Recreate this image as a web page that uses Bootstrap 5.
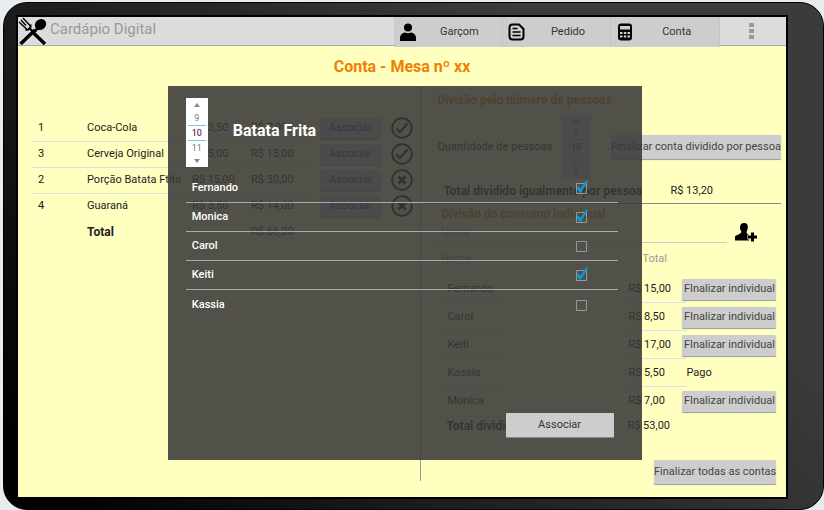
<!DOCTYPE html>
<html lang="pt-BR">
<head>
<meta charset="utf-8">
<meta name="viewport" content="width=device-width, initial-scale=1">
<title>Cardápio Digital</title>
<link href="https://cdn.jsdelivr.net/npm/bootstrap@5.3.0/dist/css/bootstrap.min.css" rel="stylesheet">
<style>
body{font-family:Roboto,"Liberation Sans",sans-serif;font-size:11px;line-height:16px;color:#222;background:#e6ecf0;padding:2px 0 0 3px;min-height:100vh;display:flex}
.device{flex:1;border:1px solid #000;border-radius:24px;padding:12px 35px 10px 12px;background:linear-gradient(50deg,#000 5%,#1b1b1b 33%,#3b3b3b 75%);display:flex}
.screen{flex:1;border:2px solid #000;background:#ffffc0}
.topbar{background:#dcdcdc;border-bottom:1px solid #aaa;height:29px}
.brand-name{font-size:15px;color:#999;margin-left:2px}
.tabs{width:326px;background:#cdcdcd;height:30px}
.tabs button{flex:1;border:0;border-right:1px solid #c5c5c5;background:none;padding:0 0 0 5px;color:#333;display:flex;align-items:center}
.tabs svg{width:18px;height:18px}
.tabs span{flex:1;text-align:center}
.more{width:66px;border:0;background:none;padding:0 4px 0 0}
h1{font-size:16px;line-height:26px;color:#f08000;font-weight:700}
h2{font-size:12px;line-height:16px;color:#f08000;font-weight:700}
.panes{padding-top:6px}
.orders{width:52.4%;padding:29px 7px 0 14px}
.bill{flex:1;border-left:1px solid #999;height:395px;padding:6px 5px 0 4px}
table{width:100%;table-layout:fixed}
.otable td{height:26px;padding:0 0 0 6px;vertical-align:middle;white-space:nowrap}
.otable tr.ln td{border-bottom:1px solid #ddd}
.otable tr td.noln{border:0}
.gbtn{border:0;background:#cdcdcd;color:#444;padding:0;border-radius:1px;box-shadow:0 1px 1px #999;text-align:center;white-space:nowrap;font-size:11px;line-height:16px}
.otable .gbtn{width:61px;height:21px;display:block}
.tot{font-size:12px;font-weight:700}
.picker{background:#fff;color:#777;display:flex;flex-direction:column;align-items:center;font-size:9px;line-height:14px}
.picker button{border:0;background:none;padding:0;height:12px;width:100%;display:flex;align-items:center;justify-content:center}
.picker .sel{border:solid #6cc8ee;border-width:1px 0;width:18px;text-align:center;color:#404}
.qty{width:30px;height:64px;background:#d2d2d8}
.qty .sel{width:26px}
.people{padding-top:7px}
.splitbtn{width:170px;height:24px}
.sum{border-bottom:1px solid #888;height:25px;padding-left:18px}
.sum b{font-size:12px;width:227px}
.individual{margin:2px 0 0 16px}
.newname{flex:1;min-width:0;border:0;border-bottom:1px solid #ccc;background:none;height:20px;padding:0 7px;color:#999;outline:0}
.newname::placeholder{color:#999}
.ptable{width:335px;margin:7px 0 0 16px}
.ptable th{font-weight:400;color:#999;height:24px;padding:0;vertical-align:top}
.ptable td{height:28px;padding:0;vertical-align:middle;white-space:nowrap}
.ptable .cell{display:block;height:28px;line-height:27px;padding-left:6px;width:65px;border-bottom:1px solid #dde}
.ptable tr.last .cell{border:0}
.ptable tr.total td{height:22px;padding-left:5px}
.ptable .gbtn{width:94px;height:21px;display:block;position:relative}
.allbtn{width:122px;height:24px;margin:23px 5px 0 0}
.dialogbox{position:absolute;z-index:2;top:69px;left:19.5%;width:61.7%;height:374px;background:rgba(55,55,55,.87);color:#fff;padding:12px 24px 23px 18px}
.dialogbox .picker{width:22px;height:69px;padding-top:1px}
.dialogbox h3{font-size:16px;line-height:20px;font-weight:700;margin:0 0 4px 25px}
.people-list{padding-top:7px}
.person{height:29px;border-bottom:1px solid #aaa;padding:0 29px 0 6px;font-size:11px;font-weight:500}
.person:last-child{border:0}
.tick{appearance:none;width:14px;height:16px;margin:0;background:url("data:image/svg+xml,%3Csvg xmlns='http://www.w3.org/2000/svg' width='14' height='14'%3E%3Cpath d='M1.5 3.5h10v10h-10z' fill='none' stroke='%23999'/%3E%3C/svg%3E") no-repeat}
.tick:checked{background-image:url("data:image/svg+xml,%3Csvg xmlns='http://www.w3.org/2000/svg' width='14' height='14'%3E%3Cpath d='M1.5 3.5h10v10h-10z' fill='none' stroke='%23999'/%3E%3Cpath d='M1.500 8l2.500-1.800 1.200 2.800L11 .8 13.500 .3 6 12.500H4z' fill='%23069bdc'/%3E%3C/svg%3E")}
.okbtn{width:108px;height:24px;margin-right:4px;color:#333;box-shadow:0 1px 0 #888}
</style>
<script src="https://cdn.jsdelivr.net/npm/bootstrap@5.3.0/dist/js/bootstrap.bundle.min.js"></script>
</head>
<body>
<svg class="d-none">
<symbol id="ok" viewBox="0 0 22 22"><circle cx="11" cy="11" r="9.800" fill="none" stroke="#000" stroke-width="1.800"/><path d="M5.500 11.500l3.500 3.500 7.500-8.500" fill="none" stroke="#000" stroke-width="2"/></symbol>
<symbol id="no" viewBox="0 0 22 22"><circle cx="11" cy="11" r="9.800" fill="none" stroke="#000" stroke-width="1.800"/><path d="M7.500 7.500l7 7m0-7l-7 7" fill="none" stroke="#000" stroke-width="2.500"/></symbol>
<symbol id="up" viewBox="0 0 6 4"><path d="M0 4l3-4 3 4z" fill="#888"/></symbol>
<symbol id="dn" viewBox="0 0 6 4"><path d="M0 0l3 4 3-4z" fill="#888"/></symbol>
</svg>
<div class="device">
<main class="screen position-relative">
<header class="topbar d-flex align-items-start">
<svg width="30" height="29" viewBox="0 0 30 29"><g fill="none" stroke="#000"><path d="M2.500 27L17 13" stroke-width="3.500"/><path d="M27 27L15 15.500" stroke-width="3.500"/><path d="M15 15l-3-3.500" stroke-width="2"/><path d="M5 1l7 7.500M1 5l7.500 7M3 3l5 5.500" stroke-width="1.400"/><path d="M12.500 7.500c1 3-2 6-5 5" stroke-width="2"/></g><ellipse cx="22.500" cy="7.500" rx="6" ry="5.200" transform="rotate(-40 22.500 7.500)"/><path d="M14 15l5-5 2 2-5 5z"/></svg>
<span class="brand-name pt-1 flex-fill">Cardápio Digital</span>
<nav class="tabs d-flex">
<button type="button"><svg viewBox="0 0 18 18"><circle cx="9" cy="4.500" r="4"/><path d="M1 18v-4q1-4 5-4.500 3 1.500 6 0 4 .5 5 4.500v4z"/></svg><span>Garçom</span></button>
<button type="button"><svg viewBox="0 0 18 18"><path d="M4.500 1.500h6.500l4.500 4.500v7.500q0 3-3 3h-8q-3 0-3-3v-9q0-3 3-3z" fill="none" stroke="#000" stroke-width="2"/><path d="M4.500 5.500h5M4.500 9h8M4.500 12.500h8" stroke="#000" stroke-width="1.700"/></svg><span>Pedido</span></button>
<button type="button"><svg viewBox="0 0 18 18"><rect x="2" y="0.500" width="14" height="17" rx="3"/><path d="M4 3h10v3.500H4z" fill="#cdcdcd"/><path d="M4 9h2.500v2H4zM7.800 9h2.500v2H7.800zM11.500 9H14v2h-2.500zM4 12.500h2.500v2H4zM7.800 12.500h2.500v2H7.800zM11.500 12.500H14v2h-2.500z" fill="#cdcdcd"/></svg><span>Conta</span></button>
</nav>
<button type="button" class="more align-self-center" aria-label="Mais opções"><svg width="5" height="16" viewBox="0 0 5 16"><path d="M0 0h5v4H0zM0 6h5v4H0zM0 12h5v4H0z" fill="#999"/></svg></button>
</header>
<h1 class="text-center m-0 pt-2">Conta - Mesa nº xx</h1>
<div class="panes d-flex">
<section class="orders">
<table class="otable">
<colgroup><col style="width:49px"><col style="width:105px"><col style="width:59px"><col style="width:69px"><col style="width:77px"><col></colgroup>
<tr class="ln"><td>1</td><td>Coca-Cola</td><td>R$ 3,50</td><td>R$ 7,00</td><td class="noln"><button type="button" class="gbtn">Associar</button></td><td class="noln p-0"><svg width="22" height="22"><use href="#ok"/></svg></td></tr>
<tr class="ln"><td>3</td><td>Cerveja Original</td><td>R$ 5,00</td><td>R$ 15,00</td><td class="noln"><button type="button" class="gbtn">Associar</button></td><td class="noln p-0"><svg width="22" height="22"><use href="#ok"/></svg></td></tr>
<tr class="ln"><td>2</td><td>Porção Batata Ftita</td><td>R$ 15,00</td><td>R$ 30,00</td><td class="noln"><button type="button" class="gbtn">Associar</button></td><td class="noln p-0"><svg width="22" height="22"><use href="#no"/></svg></td></tr>
<tr><td>4</td><td>Guaraná</td><td>R$ 3,50</td><td>R$ 14,00</td><td><button type="button" class="gbtn">Associar</button></td><td class="p-0"><svg width="22" height="22"><use href="#no"/></svg></td></tr>
<tr><td></td><td class="tot">Total</td><td></td><td>R$ 66,00</td><td></td><td></td></tr>
</table>
</section>
<section class="bill">
<h2 class="m-0 ms-2 ps-1">Divisão pelo número de pessoas</h2>
<div class="people d-flex align-items-center ms-2 ps-1">
<span class="flex-fill text-nowrap">Quantidade de pessoas</span>
<div class="picker qty me-1"><button type="button" aria-label="Mais"><svg width="6" height="4"><use href="#up"/></svg></button><span>9</span><span class="sel">10</span><span>11</span><button type="button" aria-label="Menos"><svg width="6" height="4"><use href="#dn"/></svg></button></div>
<button type="button" class="gbtn splitbtn ms-3">Finalizar conta dividido por pessoa</button>
</div>
<div class="sum d-flex align-items-center"><b>Total dividido igualmente por pessoa</b><span>R$ 13,20</span></div>
<h2 class="individual">Divisão do consumo individual</h2>
<div class="d-flex align-items-center ms-2 me-4"><input class="newname" aria-label="Nome" placeholder="Nome"><button type="button" class="border-0 bg-transparent p-0 ms-2" aria-label="Adicionar pessoa"><svg width="22" height="22" viewBox="0 0 22 22"><path d="M9 1c3 0 4 2 3.800 4.500-.2 2.500-1 3.500-1.300 4.500 0 1.500 1 2 3 3v5.500H0V15c0-2 5-2 6.500-5C5.500 8.500 5 7 5 5.500 5 2.500 6.500 1 9 1z"/><path d="M17 10.500v9M12.500 15h9" stroke="#ffffc0" stroke-width="5"/><path d="M17.500 10.500v9M13 15h9" stroke="#000" stroke-width="3"/></svg></button></div>
<table class="ptable">
<colgroup><col style="width:181px"><col style="width:60px"><col style="width:94px"></colgroup>
<thead><tr><th>Nome</th><th><span class="ps-3 ms-1">Total</span></th><th></th></tr></thead>
<tbody>
<tr><td><span class="cell">Fernando</span></td><td><span class="cell">R$ 15,00</span></td><td><button type="button" class="gbtn">FInalizar individual</button></td></tr>
<tr><td><span class="cell">Carol</span></td><td><span class="cell">R$ 8,50</span></td><td><button type="button" class="gbtn">FInalizar individual</button></td></tr>
<tr><td><span class="cell">Keiti</span></td><td><span class="cell">R$ 17,00</span></td><td><button type="button" class="gbtn">FInalizar individual</button></td></tr>
<tr><td><span class="cell">Kassia</span></td><td><span class="cell">R$ 5,50</span></td><td><span class="ps-1">Pago</span></td></tr>
<tr class="last"><td><span class="cell">Monica</span></td><td><span class="cell">R$ 7,00</span></td><td><button type="button" class="gbtn">FInalizar individual</button></td></tr>
<tr class="total"><td class="tot">Total dividido por pessoa</td><td>R$ 53,00</td><td></td></tr>
</tbody>
</table>
<div class="text-end"><button type="button" class="gbtn allbtn">Finalizar todas as contas</button></div>
</section>
</div>
<div class="dialogbox d-flex flex-column" role="dialog" aria-labelledby="dish">
<div class="d-flex align-items-center">
<div class="picker"><button type="button" aria-label="Mais"><svg width="6" height="4"><use href="#up"/></svg></button><span>9</span><span class="sel">10</span><span>11</span><button type="button" aria-label="Menos"><svg width="6" height="4"><use href="#dn"/></svg></button></div>
<h3 id="dish">Batata Frita</h3>
</div>
<div class="people-list">
<label class="person d-flex align-items-center justify-content-between">Fernando<input type="checkbox" class="tick" checked></label>
<label class="person d-flex align-items-center justify-content-between">Monica<input type="checkbox" class="tick" checked></label>
<label class="person d-flex align-items-center justify-content-between">Carol<input type="checkbox" class="tick"></label>
<label class="person d-flex align-items-center justify-content-between">Keiti<input type="checkbox" class="tick" checked></label>
<label class="person d-flex align-items-center justify-content-between">Kassia<input type="checkbox" class="tick"></label>
</div>
<button type="button" class="gbtn okbtn mt-auto align-self-end">Associar</button>
</div>
</main>
</div>
</body>
</html>
